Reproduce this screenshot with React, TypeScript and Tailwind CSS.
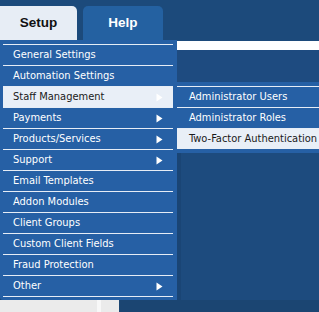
import React from "react";

const mainItems: { label: string; arrow?: boolean; active?: boolean }[] = [
  { label: "General Settings" },
  { label: "Automation Settings" },
  { label: "Staff Management", arrow: true, active: true },
  { label: "Payments", arrow: true },
  { label: "Products/Services", arrow: true },
  { label: "Support", arrow: true },
  { label: "Email Templates" },
  { label: "Addon Modules" },
  { label: "Client Groups" },
  { label: "Custom Client Fields" },
  { label: "Fraud Protection" },
  { label: "Other", arrow: true },
];

const subItems: { label: string; active?: boolean }[] = [
  { label: "Administrator Users" },
  { label: "Administrator Roles" },
  { label: "Two-Factor Authentication", active: true },
];

function Arrow() {
  return (
    <svg width="7" height="9" viewBox="0 0 7 9" className="shrink-0">
      <path d="M0.5 0.5 L6.5 4.5 L0.5 8.5 Z" fill="#ffffff" />
    </svg>
  );
}

export default function App() {
  return (
    <div
      className="w-[319px] h-[312px] bg-[#1c4a7b] overflow-hidden flex flex-col"
      style={{ fontFamily: '"DejaVu Sans Condensed", "DejaVu Sans", sans-serif' }}
    >
      {/* tabs */}
      <div className="h-[40px] flex items-end pt-[6px]">
        <div
          className="w-[77px] h-[34px] bg-[#e7edf5] rounded-tr-[5px] flex items-center justify-center text-[13.5px] font-bold text-[#111]"
          style={{ fontFamily: '"Liberation Sans", Arial, sans-serif' }}
        >
          Setup
        </div>
        <div
          className="ml-[6px] w-[80px] h-[34px] bg-[#2461a1] rounded-t-[5px] flex items-center justify-center text-[13.5px] font-bold text-white"
          style={{ fontFamily: '"Liberation Sans", Arial, sans-serif' }}
        >
          Help
        </div>
      </div>

      {/* menu row */}
      <div className="h-[260px] flex">
        <div className="w-[177px] bg-[#2660a5] pt-[4px] pl-[3px] pr-[4px] rounded-bl-[3px]">
          {mainItems.map((it, i) => (
            <div
              key={it.label}
              className={
                "h-[21px] border-t border-[#e6edf6] flex items-center pl-[10px] pr-[10px] text-[11px] " +
                (it.active ? "bg-[#e9eff7] text-[#1a1a1a]" : "text-white") +
                (i === mainItems.length - 1 ? " border-b h-[22px]" : "")
              }
            >
              <span className="flex-1">{it.label}</span>
              {it.arrow && <Arrow />}
            </div>
          ))}
        </div>
        <div className="flex-1 flex flex-col">
          <div className="h-[1px]" />
          <div className="h-[9px] bg-white" />
          <div className="h-[32px] bg-[#1e4b80]" />
          <div className="bg-[#2660a5] pt-[4px] pb-[4px]">
            {subItems.map((it) => (
              <div
                key={it.label}
                className={
                  "h-[21px] border-t border-[#e6edf6] flex items-center pl-[12px] text-[11px] whitespace-nowrap " +
                  (it.active ? "bg-[#e9eff7] text-[#1a1a1a]" : "text-white")
                }
              >
                {it.label}
              </div>
            ))}
          </div>
          <div className="flex-1 flex">
            <div className="w-[4px] bg-[#1a4575]" />
            <div className="flex-1 bg-[#1d4b7e]" />
          </div>
        </div>
      </div>

      {/* bottom strip */}
      <div className="flex-1 flex">
        <div className="w-[97px] bg-[#ebebeb]" />
        <div className="w-[4px] bg-[#f8f8f8]" />
        <div className="w-[18px] bg-[#ebebeb]" />
        <div className="flex-1 bg-[#1b4572]" />
      </div>
    </div>
  );
}
